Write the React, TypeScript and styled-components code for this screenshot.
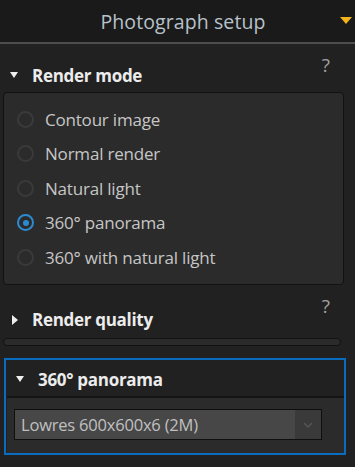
import styled, { createGlobalStyle } from 'styled-components';

const GlobalStyle = createGlobalStyle`
  html, body {
    margin: 0;
    padding: 0;
    background: #212121;
  }
  body {
    font-family: "Open Sans", "Noto Sans", sans-serif;
  }
`;

const Panel = styled.div`
  width: 355px;
  height: 467px;
  background: #212121;
  overflow: hidden;
  box-sizing: border-box;
`;

const Header = styled.header`
  height: 42px;
  display: grid;
  grid-template-columns: 1fr auto 1fr;
  align-items: center;
  padding-left: 14px;
  padding-right: 3px;
  background: #1a1a1a;
  border-bottom: 2px solid #4d4d4d;
`;

const Title = styled.h1`
  grid-column: 2;
  margin: 0;
  font-size: 19.5px;
  font-weight: 400;
  color: #b8c2cb;
  letter-spacing: 0.1px;
`;

const OrangeArrow = styled.span`
  grid-column: 3;
  justify-self: end;
  width: 0;
  height: 0;
  border-left: 6px solid transparent;
  border-right: 6px solid transparent;
  border-top: 7px solid #f2b31c;
  margin-top: -2px;
`;

const SectionHead = styled.div<{ $height: number; $top: number }>`
  height: ${({ $height }) => $height}px;
  display: flex;
  align-items: center;
  padding: ${({ $top }) => $top}px 24px 0 10px;
  box-sizing: border-box;
  position: relative;
`;

const Caret = styled.span<{ $open: boolean }>`
  width: 0;
  height: 0;
  margin-right: 14px;
  ${({ $open }) =>
    $open
      ? `border-left: 4.5px solid transparent;
         border-right: 4.5px solid transparent;
         border-top: 6px solid #eeeeee;`
      : `border-top: 5px solid transparent;
         border-bottom: 5px solid transparent;
         border-left: 6px solid #eeeeee;
         margin-left: 2px;
         margin-right: 14px;`}
`;

const SectionTitle = styled.span`
  flex: 1;
  font-size: 17px;
  font-weight: 700;
  color: #ececec;
  letter-spacing: -0.3px;
`;

const Help = styled.span`
  position: absolute;
  right: 25px;
  top: 8px;
  font-size: 19px;
  color: #a0a0a0;
`;

const RadioBox = styled.div`
  margin: 0 11px 0 3px;
  height: 193px;
  box-sizing: border-box;
  padding: 9px 0 0 13px;
  background: #2b2b2b;
  border: 1px solid #121212;
  border-radius: 4px;
`;

const RadioRow = styled.label`
  height: 34.5px;
  display: flex;
  align-items: center;
  gap: 11px;
  font-size: 17px;
  color: #c6c6c6;
  letter-spacing: -0.2px;
`;

const RadioCircle = styled.span<{ $checked: boolean }>`
  width: 17px;
  height: 17px;
  box-sizing: border-box;
  border-radius: 50%;
  border: 2px solid ${({ $checked }) => ($checked ? '#2c8ad0' : '#3a3a3a')};
  display: flex;
  align-items: center;
  justify-content: center;

  &::after {
    content: '';
    width: 6px;
    height: 6px;
    border-radius: 50%;
    background: ${({ $checked }) => ($checked ? '#2c8ad0' : 'transparent')};
  }
`;

const CollapsedBar = styled.div`
  margin: 0 14px 0 3px;
  height: 6px;
  background: #2b2b2b;
  border: 1px solid #121212;
  border-radius: 4px;
`;

const Focused = styled.section`
  margin: 12px 9px 0 4px;
  height: 97px;
  box-sizing: border-box;
  border: 2px solid #0a6cbf;
  display: flex;
  flex-direction: column;
`;

const Content = styled.div`
  flex: 1;
  margin-left: 1px;
  border-top: 2px solid #141414;
  background: #2b2b2b;
  padding: 11px 0 0 7px;
`;

const Select = styled.div`
  width: 308px;
  height: 31px;
  box-sizing: border-box;
  display: flex;
  border: 1px solid #0f0f0f;
  background: #474747;
`;

const SelectText = styled.span`
  flex: 1;
  display: flex;
  align-items: center;
  padding-left: 6px;
  font-size: 16.5px;
  color: #c0c0c0;
  letter-spacing: -0.2px;
`;

const SelectArrow = styled.span`
  width: 26px;
  background: #3a3a3a;
  display: flex;
  align-items: center;
  justify-content: center;
`;

const options = [
  'Contour image',
  'Normal render',
  'Natural light',
  '360° panorama',
  '360° with natural light',
];

export default function App() {
  return (
    <>
      <GlobalStyle />
      <Panel>
        <Header>
          <Title>Photograph setup</Title>
          <OrangeArrow />
        </Header>

        <SectionHead $height={48} $top={14}>
          <Caret $open />
          <SectionTitle>Render mode</SectionTitle>
          <Help>?</Help>
        </SectionHead>
        <RadioBox>
          {options.map((o) => (
            <RadioRow key={o}>
              <RadioCircle $checked={o === '360° panorama'} />
              {o}
            </RadioRow>
          ))}
        </RadioBox>

        <SectionHead $height={53} $top={16}>
          <Caret $open={false} />
          <SectionTitle>Render quality</SectionTitle>
          <Help>?</Help>
        </SectionHead>
        <CollapsedBar />

        <Focused>
          <SectionHead $height={36} $top={2}>
            <Caret $open />
            <SectionTitle>360° panorama</SectionTitle>
          </SectionHead>
          <Content>
            <Select>
              <SelectText>Lowres 600x600x6 (2M)</SelectText>
              <SelectArrow>
                <svg width="10" height="6" viewBox="0 0 10 6">
                  <path d="M1 1 L5 5 L9 1" stroke="#555" strokeWidth="1.5" fill="none" />
                </svg>
              </SelectArrow>
            </Select>
          </Content>
        </Focused>
      </Panel>
    </>
  );
}
